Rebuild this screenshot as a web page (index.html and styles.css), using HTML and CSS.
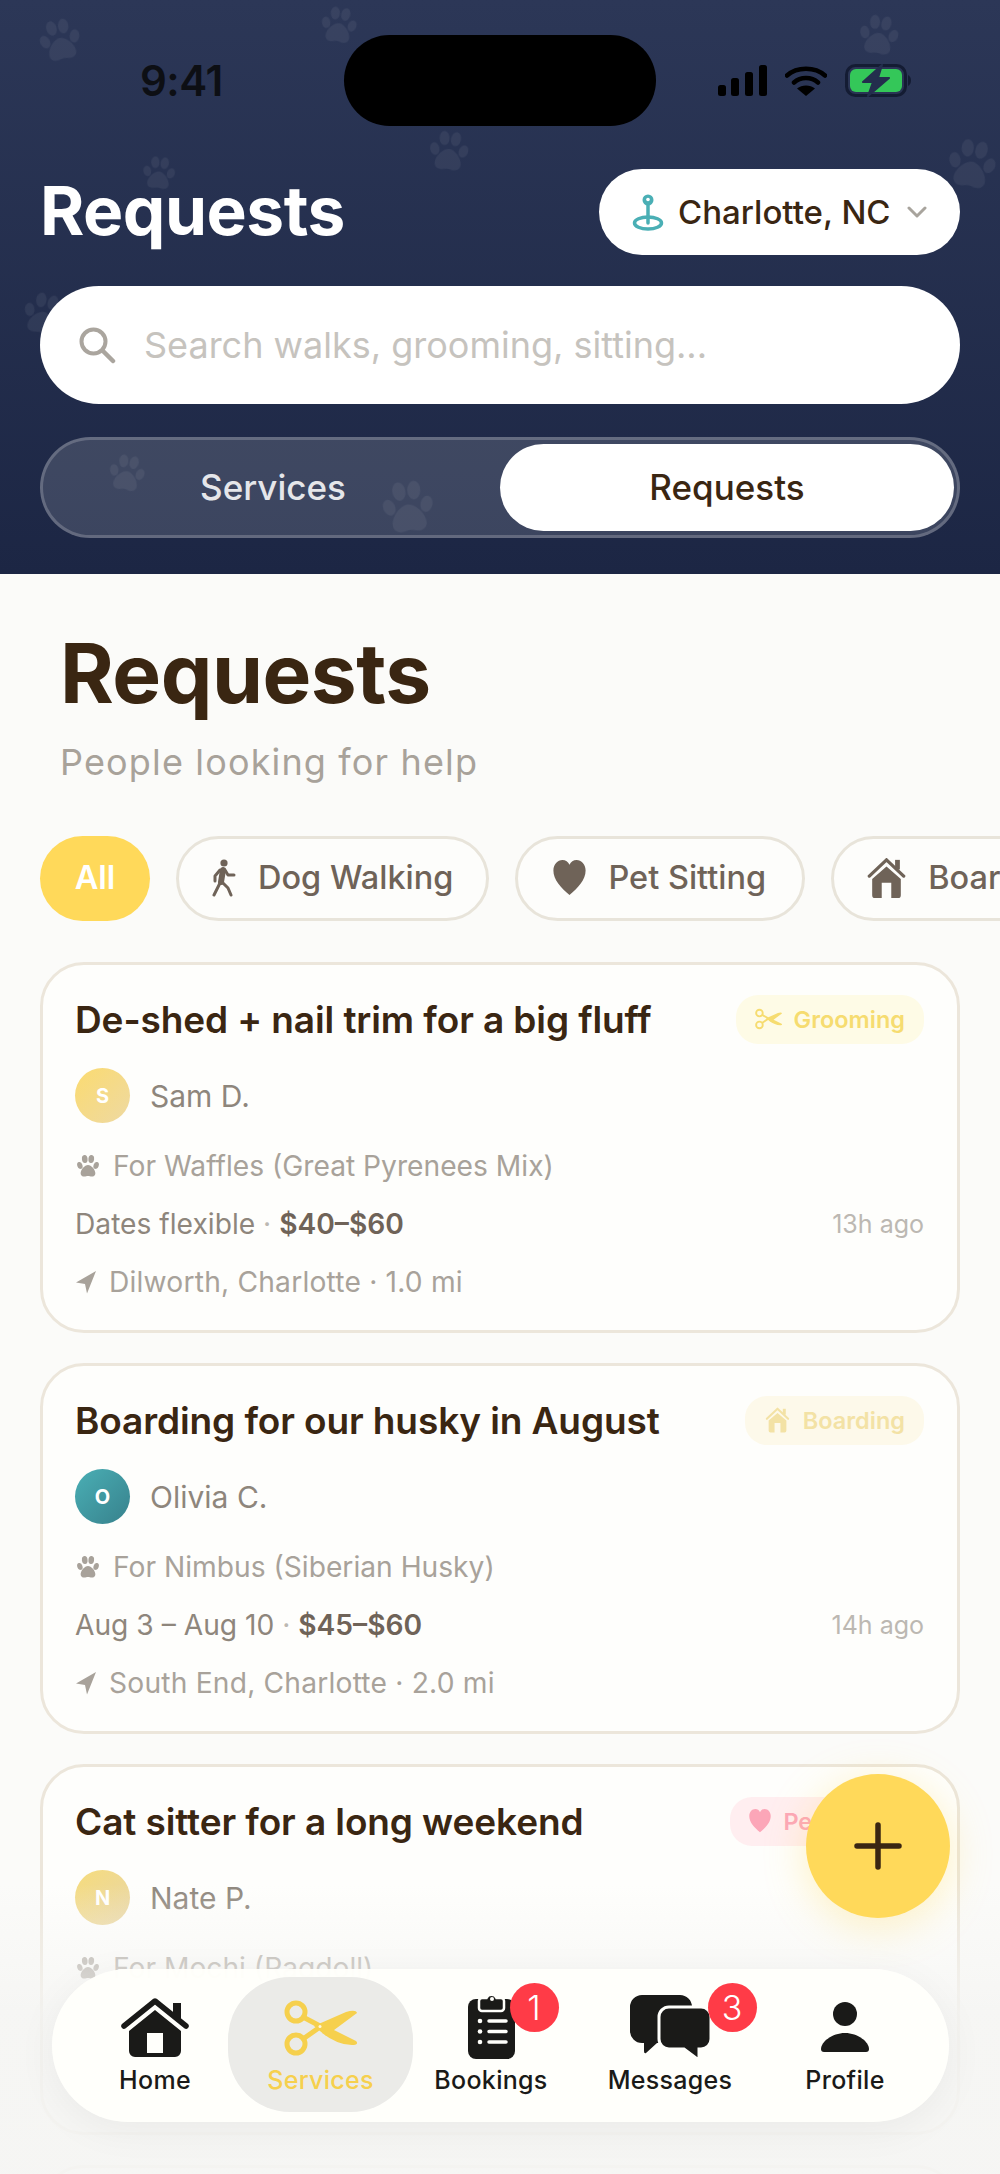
FILE: index.html
```html
<!DOCTYPE html>
<html>
<head>
    <title>Requests</title>
    <link rel="stylesheet" href="styles.css">
</head>
<body>
<svg class="defs" width="0" height="0">
    <symbol id="paw" viewBox="0 0 24 24">
        <ellipse cx="4.5" cy="11.500" rx="2.4" ry="3.3" transform="rotate(-18 4.5 11.500)"/>
        <ellipse cx="9" cy="5.500" rx="2.6" ry="3.700" transform="rotate(-6 9 5.500)"/>
        <ellipse cx="15" cy="5.500" rx="2.6" ry="3.700" transform="rotate(6 15 5.500)"/>
        <ellipse cx="19.500" cy="11.500" rx="2.4" ry="3.3" transform="rotate(18 19.500 11.500)"/>
        <path d="M12 11c-3 0-6.800 4.200-6.800 7.700 0 2 1.500 3.100 3.300 3.100 1.300 0 2.300-.6 3.500-.6s2.200.6 3.500.6c1.800 0 3.300-1.100 3.300-3.100C18.800 15.200 15 11 12 11z"/>
    </symbol>
    <symbol id="arrow" viewBox="0 0 22 24">
        <path d="M21 1 1 12.500l9 1.500 2 9.500z"/>
    </symbol>
    <symbol id="heart" viewBox="0 0 34 38">
        <path d="M17 37C8 29 0 21 0 11 0 4.500 4.500 0 9.500 0 13 0 15.500 2 17 5c1.500-3 4-5 7.500-5C29.500 0 34 4.500 34 11c0 10-8 18-17 26z"/>
    </symbol>
    <symbol id="house" viewBox="0 0 40 44">
        <path d="M20 3 2 20M20 3l18 17" fill="none" stroke="currentColor" stroke-width="3.500" stroke-linecap="round"/>
        <path d="M29 3h5v10h-5z"/>
        <path d="M20 10 35 23v17a3 3 0 0 1-3 3H8a3 3 0 0 1-3-3V23zM15 27v16h10V27z" fill-rule="evenodd"/>
    </symbol>
</svg>

<div class="screen">
    <header class="top">
        <svg class="paw paw-a"><use href="#paw"/></svg>
        <svg class="paw paw-b"><use href="#paw"/></svg>
        <svg class="paw paw-c"><use href="#paw"/></svg>
        <svg class="paw paw-d"><use href="#paw"/></svg>
        <svg class="paw paw-e"><use href="#paw"/></svg>
        <svg class="paw paw-f"><use href="#paw"/></svg>
        <svg class="paw paw-g"><use href="#paw"/></svg>
        <svg class="paw paw-h"><use href="#paw"/></svg>
        <svg class="paw paw-i"><use href="#paw"/></svg>

        <div class="island"></div>

        <div class="status">
            <span class="time">9:41</span>
            <div class="status-icons">
                <svg width="49" height="31" viewBox="0 0 49 31">
                    <rect x="0" y="20" width="8" height="11" rx="2.500"/>
                    <rect x="13" y="13" width="8" height="18" rx="2.500"/>
                    <rect x="27" y="7" width="8" height="24" rx="2.500"/>
                    <rect x="41" y="0" width="8" height="31" rx="2.500"/>
                </svg>
                <svg width="42" height="31" viewBox="0 0 42 31">
                    <path d="M2 10.500C12 1.500 30 1.500 40 10.500M9 17.500c6.500-6 17.500-6 24 0" fill="none" stroke="#000" stroke-width="4.500" stroke-linecap="round"/>
                    <path d="M21 31 12 23.500c5-4 13-4 18 0z"/>
                </svg>
                <svg width="67" height="33" viewBox="0 0 67 33">
                    <rect x="1.500" y="1.500" width="59" height="30" rx="9" fill="none" stroke="#141c33" stroke-width="3"/>
                    <rect x="5" y="5" width="52" height="23" rx="6" fill="#34c759"/>
                    <path d="M63 11c2 1 3 3 3 5.500s-1 4.500-3 5.500z" fill="#141c33"/>
                    <path d="M37 1 18 18h10l-5 14 21-18H33z" fill="#232e4d" stroke="#232e4d" stroke-width="2" stroke-linejoin="round"/>
                </svg>
            </div>
        </div>

        <div class="title-row">
            <h2 class="top-title">Requests</h2>
            <div class="city">
                <svg width="32" height="38" viewBox="0 0 32 38">
                    <ellipse cx="16" cy="30" rx="13.500" ry="6" fill="none" stroke="#4aafb5" stroke-width="3.500"/>
                    <path d="M16 12v18" stroke="#4aafb5" stroke-width="3.500" stroke-linecap="round"/>
                    <circle cx="16" cy="7" r="5.500" fill="#4aafb5"/>
                    <circle cx="16" cy="6.500" r="1.800" fill="#fff"/>
                </svg>
                <span class="city-name">Charlotte, NC</span>
                <svg width="20" height="12" viewBox="0 0 20 12">
                    <path d="M2 2l8 8 8-8" fill="none" stroke="#a8a49d" stroke-width="3" stroke-linecap="round" stroke-linejoin="round"/>
                </svg>
            </div>
        </div>

        <div class="search">
            <svg width="38" height="38" viewBox="0 0 38 38">
                <circle cx="15.500" cy="15.500" r="12" fill="none" stroke="#aaa59e" stroke-width="4"/>
                <path d="M25 25l10 10" stroke="#aaa59e" stroke-width="4.500" stroke-linecap="round"/>
            </svg>
            <span class="search-text">Search walks, grooming, sitting...</span>
        </div>

        <div class="segment">
            <div class="seg-item">Services</div>
            <div class="seg-item seg-on">Requests</div>
        </div>
    </header>

    <div class="heading">
        <h1>Requests</h1>
        <p>People looking for help</p>
    </div>

    <div class="chips">
        <div class="chip chip-on">All</div>
        <div class="chip">
            <svg class="chip-walk" width="24" height="38" viewBox="0 0 24 38">
                <circle cx="12" cy="4" r="3.600" fill="#6f6358"/>
                <path d="M11 11 9 23" stroke="#6f6358" stroke-width="6" stroke-linecap="round"/>
                <path d="M13 11l3 5h6M8 11l-5 6v5M8 24 2 36M11 24l5 5 3 7" fill="none" stroke="#6f6358" stroke-width="3" stroke-linecap="round" stroke-linejoin="round"/>
            </svg>
            Dog Walking
        </div>
        <div class="chip chip-pet">
            <svg class="chip-heart"><use href="#heart"/></svg>
            Pet Sitting
        </div>
        <div class="chip">
            <svg class="chip-house"><use href="#house"/></svg>
            Boarding
        </div>
    </div>

    <div class="list">
        <div class="card">
            <div class="card-top">
                <div class="card-title">De-shed + nail trim for a big fluff</div>
                <div class="tag tag-yellow">
                    <svg class="tag-icon" viewBox="0 0 73 56">
                        <circle cx="12" cy="12" r="9" fill="none" stroke="currentColor" stroke-width="5"/>
                        <circle cx="12" cy="44" r="9" fill="none" stroke="currentColor" stroke-width="5"/>
                        <path d="M19 17l17 9M19 39l17-12" stroke="currentColor" stroke-width="5"/>
                        <path d="M30 26 62 12q10-3 11 1L42 36zM42 26l30 15q3 3-2 4-15 1-32-12z" fill="currentColor"/>
                    </svg>
                    Grooming
                </div>
            </div>
            <div class="person">
                <div class="avatar avatar-yellow">S</div>
                <span>Sam D.</span>
            </div>
            <div class="row row-pet"><svg class="row-paw"><use href="#paw"/></svg>For Waffles (Great Pyrenees Mix)</div>
            <div class="row row-when">
                <span>Dates flexible <i>·</i> <b>$40–$60</b></span>
                <span class="ago">13h ago</span>
            </div>
            <div class="row row-loc"><svg class="row-arrow"><use href="#arrow"/></svg>Dilworth, Charlotte · 1.0 mi</div>
        </div>

        <div class="card">
            <div class="card-top">
                <div class="card-title">Boarding for our husky in August</div>
                <div class="tag tag-cream">
                    <svg class="tag-icon tag-house"><use href="#house"/></svg>
                    Boarding
                </div>
            </div>
            <div class="person">
                <div class="avatar avatar-teal">O</div>
                <span>Olivia C.</span>
            </div>
            <div class="row row-pet"><svg class="row-paw"><use href="#paw"/></svg>For Nimbus (Siberian Husky)</div>
            <div class="row row-when">
                <span>Aug 3 – Aug 10 <i>·</i> <b>$45–$60</b></span>
                <span class="ago">14h ago</span>
            </div>
            <div class="row row-loc"><svg class="row-arrow"><use href="#arrow"/></svg>South End, Charlotte · 2.0 mi</div>
        </div>

        <div class="card">
            <div class="card-top">
                <div class="card-title">Cat sitter for a long weekend</div>
                <div class="tag tag-pink">
                    <svg class="tag-icon tag-heart"><use href="#heart"/></svg>
                    Pet Sitting
                </div>
            </div>
            <div class="person">
                <div class="avatar avatar-sand">N</div>
                <span>Nate P.</span>
            </div>
            <div class="row row-pet"><svg class="row-paw"><use href="#paw"/></svg>For Mochi (Ragdoll)</div>
        </div>

        <div class="card"></div>
    </div>

    <div class="fade"></div>

    <div class="fab">
        <svg width="48" height="48" viewBox="0 0 48 48">
            <path d="M24 3v42M3 24h42" stroke="#3a2612" stroke-width="5.500" stroke-linecap="round"/>
        </svg>
    </div>

    <nav class="tabs">
        <div class="tab tab-home">
            <svg width="68" height="60" viewBox="0 0 68 60">
                <path d="M3 29 34 4l31 25" fill="none" stroke="#1a1a18" stroke-width="5.500" stroke-linecap="round" stroke-linejoin="round"/>
                <path d="M52 6h8v16h-8z" fill="#1a1a18"/>
                <path d="M34 13 60 34v20a6 6 0 0 1-6 6H14a6 6 0 0 1-6-6V34zM26 36v20h16V36z" fill="#1a1a18" fill-rule="evenodd"/>
            </svg>
            <span>Home</span>
        </div>
        <div class="tab tab-services">
            <svg width="73" height="56" viewBox="0 0 73 56">
                <circle cx="12" cy="12" r="9" fill="none" stroke="#f6d04d" stroke-width="5"/>
                <circle cx="12" cy="44" r="9" fill="none" stroke="#f6d04d" stroke-width="5"/>
                <path d="M19 17l17 9M19 39l17-12" stroke="#f6d04d" stroke-width="5"/>
                <path d="M30 26 62 12q10-3 11 1L42 36zM42 26l30 15q3 3-2 4-15 1-32-12z" fill="#f6d04d"/>
                <circle cx="36" cy="26.500" r="1.500" fill="#fff8dc"/>
            </svg>
            <span>Services</span>
        </div>
        <div class="tab tab-bookings">
            <div class="tab-icon">
                <svg width="47" height="67" viewBox="0 0 47 67">
                    <rect x="0" y="7" width="47" height="60" rx="8" fill="#1a1a18"/>
                    <path d="M11 9a3 3 0 0 1 3-3h4.500a5.500 5.500 0 0 1 10 0H33a3 3 0 0 1 3 3v7a3 3 0 0 1-3 3H14a3 3 0 0 1-3-3z" fill="#1a1a18" stroke="#fffffb" stroke-width="2.500"/>
                    <circle cx="24" cy="7" r="2" fill="#fffffb"/>
                    <path d="M21 29h17M21 39.500h17M21 50h17" stroke="#fffffb" stroke-width="3.500" stroke-linecap="round"/>
                    <circle cx="12" cy="29" r="2.300" fill="#fffffb"/>
                    <circle cx="12" cy="39.500" r="2.300" fill="#fffffb"/>
                    <circle cx="12" cy="50" r="2.300" fill="#fffffb"/>
                </svg>
                <em class="badge badge-one">1</em>
            </div>
            <span>Bookings</span>
        </div>
        <div class="tab tab-messages">
            <div class="tab-icon">
                <svg width="81" height="64" viewBox="0 0 81 64">
                    <path d="M12 0h38a12 12 0 0 1 12 12v24a12 12 0 0 1-12 12H27L16 58q-2 1-2-2v-8h-2A12 12 0 0 1 0 36V12A12 12 0 0 1 12 0z" fill="#1a1a18"/>
                    <path d="M39 12h32a10 10 0 0 1 10 10v22a10 10 0 0 1-10 10h-2v8q0 3-3 1L54 54H39a10 10 0 0 1-10-10V22a10 10 0 0 1 10-10z" fill="#1a1a18" stroke="#fffffb" stroke-width="3"/>
                </svg>
                <em class="badge badge-three">3</em>
            </div>
            <span>Messages</span>
        </div>
        <div class="tab tab-profile">
            <svg width="48" height="51" viewBox="0 0 48 51">
                <circle cx="24" cy="12" r="12" fill="#1a1a18"/>
                <path d="M24 31C11 31 0 40 0 47a3 3 0 0 0 3 3h42a3 3 0 0 0 3-3c0-7-11-16-24-16z" fill="#1a1a18"/>
            </svg>
            <span>Profile</span>
        </div>
    </nav>
</div>
</body>
</html>
```
FILE: styles.css
```css
* {
    box-sizing: border-box;
}

body {
    margin: 0;
    font-family: Inter, "Liberation Sans", sans-serif;
    background-color: #fbfbf9;
}

.defs {
    position: absolute;
}

.screen {
    position: relative;
    width: 1000px;
    height: 2174px;
    overflow: hidden;
    background-color: #fbfbf9;
}

/* dark header */
.top {
    position: relative;
    height: 574px;
    padding: 64px 40px 0;
    background: linear-gradient(#2c3757, #1c2644);
}

.paw {
    position: absolute;
    fill: #fff;
    opacity: 0.06;
    filter: blur(0.6px);
}

.paw-a { left: 36px; top: 16px; width: 48px; height: 48px; transform: rotate(-12deg); }
.paw-b { left: 318px; top: 4px; width: 42px; height: 42px; transform: rotate(8deg); }
.paw-c { left: 856px; top: 12px; width: 46px; height: 46px; transform: rotate(8deg); }
.paw-d { left: 426px; top: 128px; width: 46px; height: 46px; transform: rotate(6deg); }
.paw-e { left: 140px; top: 154px; width: 38px; height: 38px; transform: rotate(6deg); }
.paw-f { left: 944px; top: 136px; width: 56px; height: 56px; transform: rotate(10deg); }
.paw-g { left: 20px; top: 290px; width: 48px; height: 48px; transform: rotate(14deg); }
.paw-h { left: 106px; top: 452px; width: 42px; height: 42px; transform: rotate(10deg); z-index: 2; }
.paw-i { left: 378px; top: 477px; width: 60px; height: 60px; transform: rotate(-6deg); z-index: 2; }

.island {
    position: absolute;
    left: 344px;
    top: 35px;
    width: 312px;
    height: 91px;
    border-radius: 46px;
    background-color: #000;
}

.status {
    display: flex;
    align-items: center;
    height: 33px;
    padding: 0 48px 0 100px;
}

.time {
    font-size: 42px;
    font-weight: 600;
    color: #0d0f14;
    letter-spacing: -0.5px;
}

.status-icons {
    display: flex;
    align-items: center;
    gap: 18px;
    margin-left: auto;
}

.title-row {
    display: flex;
    align-items: center;
    justify-content: space-between;
    height: 86px;
    margin-top: 72px;
}

.top-title {
    margin: 0 0 3px;
    font-size: 67.6px;
    font-weight: 700;
    color: #fff;
    letter-spacing: -0.5px;
}

.city {
    display: flex;
    align-items: center;
    width: 361px;
    height: 86px;
    padding-left: 33px;
    border-radius: 43px;
    background-color: #fff;
}

.city-name {
    margin-left: 14px;
    margin-right: 16px;
    font-size: 33px;
    font-weight: 500;
    color: #3a2612;
}

.search {
    display: flex;
    align-items: center;
    height: 118px;
    margin-top: 31px;
    padding-left: 38px;
    border-radius: 59px;
    background-color: #fff;
}

.search-text {
    margin-left: 28px;
    font-size: 36px;
    color: #c6c3be;
}

.segment {
    position: relative;
    display: flex;
    align-items: center;
    height: 101px;
    margin-top: 33px;
    padding: 0 3px;
    border: 3px solid rgba(255, 255, 255, 0.2);
    border-radius: 51px;
    background-color: rgba(255, 255, 255, 0.14);
}

.seg-item {
    display: flex;
    align-items: center;
    justify-content: center;
    flex: 1;
    height: 87px;
    padding-bottom: 2px;
    font-size: 35px;
    font-weight: 500;
    color: #e5e6ea;
}

.seg-on {
    flex: none;
    width: 454px;
    border-radius: 44px;
    background-color: #fff;
    color: #3a2612;
}

/* page heading */
.heading {
    padding: 55px 60px 0;
}

.heading h1 {
    margin: 0;
    font-size: 82px;
    line-height: 90px;
    font-weight: 700;
    color: #3a2612;
    letter-spacing: -0.5px;
}

.heading p {
    margin: 21px 0 0;
    font-size: 36px;
    line-height: 44px;
    color: #a8a29a;
    letter-spacing: 1.15px;
}

/* filters */
.chips {
    display: flex;
    align-items: center;
    gap: 26px;
    height: 85px;
    margin-top: 52px;
    padding-left: 40px;
    white-space: nowrap;
}

.chip {
    display: flex;
    flex: none;
    align-items: center;
    height: 85px;
    padding: 0 33px 2px;
    border: 3px solid #e8e4da;
    border-radius: 43px;
    background-color: #fdfdfb;
    font-size: 32.5px;
    font-weight: 500;
    color: #6f6358;
    fill: #6f6358;
}

.chip-pet {
    padding: 0 36px 2px 35px;
}

.chip-on {
    width: 110px;
    padding: 0 0 2px;
    justify-content: center;
    border: none;
    background-color: #ffd95a;
    font-weight: 600;
    color: #fff;
}

.chip-walk {
    margin-right: 22px;
}

.chip-heart {
    width: 33px;
    height: 36px;
    margin-right: 22px;
}

.chip-house {
    width: 39px;
    height: 42px;
    margin-right: 22px;
}

/* request cards */
.list {
    display: flex;
    flex-direction: column;
    gap: 30px;
    margin-top: 41px;
    padding: 0 40px;
}

.card {
    flex: none;
    height: 371px;
    padding: 31px 33px 0 32px;
    border: 3px solid #ece6db;
    border-radius: 44px;
    background-color: #fefefc;
}

.card-top {
    display: flex;
    align-items: center;
    justify-content: space-between;
    height: 46px;
}

.card-title {
    font-size: 37px;
    font-weight: 600;
    color: #3a2612;
    letter-spacing: -0.1px;
}

.tag {
    display: flex;
    align-items: center;
    height: 49px;
    padding: 0 19px;
    border-radius: 22px;
    font-size: 23.5px;
    font-weight: 600;
    white-space: nowrap;
}

.tag-icon {
    width: 27px;
    height: 22px;
    margin-right: 12px;
    fill: currentColor;
}

.tag-house {
    height: 26px;
    color: #f3e2a5;
}

.tag-heart {
    width: 22px;
    height: 24px;
}

.tag-yellow {
    background-color: #fefbe6;
    color: #f6dc70;
}

.tag-cream {
    background-color: #fdf9ea;
    color: #f3e2a5;
}

.tag-pink {
    padding: 0 25px 0 19px;
    background-color: #ffeef0;
    color: #fca6b8;
}

.person {
    display: flex;
    align-items: center;
    gap: 20px;
    margin-top: 26px;
    font-size: 30px;
    color: #8e867c;
}

.avatar {
    display: flex;
    align-items: center;
    justify-content: center;
    width: 55px;
    height: 55px;
    border-radius: 50%;
    font-size: 20px;
    font-weight: 700;
    color: #fff;
}

.avatar-yellow {
    background: linear-gradient(135deg, #fbdb70, #eed9a2);
}

.avatar-teal {
    background: linear-gradient(135deg, #4aafb5, #37818c);
}

.avatar-sand {
    background: linear-gradient(135deg, #f6dc7c, #e8d6a8);
}

.row {
    display: flex;
    align-items: center;
    height: 40px;
    margin-top: 18px;
    font-size: 28.2px;
    color: #a8a29a;
}

.row-pet {
    margin-top: 23px;
}

.row-paw {
    width: 26px;
    height: 26px;
    margin-right: 12px;
    fill: #a8a29a;
}

.row-arrow {
    width: 22px;
    height: 24px;
    margin-right: 12px;
    fill: #a8a29a;
}

.row-loc {
    letter-spacing: 0.2px;
}

.row-when {
    justify-content: space-between;
    color: #8e867c;
}

.row-when i {
    font-style: normal;
    color: #bcb8b2;
}

.row-when b {
    font-weight: 600;
    color: #6f6358;
}

.ago {
    font-size: 25px;
    color: #bcb8b2;
}

/* overlays at the bottom */
.fade {
    position: absolute;
    left: 0;
    right: 0;
    bottom: 0;
    height: 290px;
    background: linear-gradient(rgba(245, 245, 243, 0), rgba(245, 245, 243, 0.85) 45%, rgba(245, 245, 243, 0.9));
}

.fab {
    position: absolute;
    left: 806px;
    top: 1774px;
    display: flex;
    align-items: center;
    justify-content: center;
    width: 144px;
    height: 144px;
    border-radius: 50%;
    background-color: #ffd95a;
    box-shadow: 0 8px 40px rgba(255, 217, 90, 0.35);
}

.tabs {
    position: absolute;
    left: 52px;
    top: 1969px;
    display: flex;
    width: 897px;
    height: 153px;
    padding: 8px 30px 10px;
    border-radius: 76px;
    background-color: rgba(255, 255, 251, 0.96);
    box-shadow: 0 8px 40px rgba(0, 0, 0, 0.05);
}

.tab {
    display: flex;
    flex-direction: column;
    align-items: center;
    height: 135px;
    font-size: 25px;
    font-weight: 500;
    color: #1a1a18;
}

.tab span {
    position: absolute;
    top: 94px;
    line-height: 34px;
    letter-spacing: 0.3px;
}

.tab svg {
    display: block;
}

.tab-home {
    width: 146px;
    padding-top: 20px;
}

.tab-services {
    width: 185px;
    padding-top: 23px;
    border-radius: 62px;
    background-color: #ebebe8;
    color: #f6d04d;
}

.tab-bookings {
    width: 156px;
    padding-top: 15px;
}

.tab-messages {
    width: 202px;
    padding-top: 18px;
}

.tab-profile {
    width: 148px;
    padding-top: 25px;
}

.tab-icon {
    position: relative;
}

.badge {
    position: absolute;
    display: flex;
    align-items: center;
    justify-content: center;
    width: 49px;
    height: 49px;
    border-radius: 50%;
    background-color: #ff3b47;
    font-size: 34px;
    font-weight: 300;
    font-style: normal;
    color: #fff;
}

.badge-one {
    left: 42px;
    top: -9px;
}

.badge-three {
    left: 78px;
    top: -12px;
}
```
